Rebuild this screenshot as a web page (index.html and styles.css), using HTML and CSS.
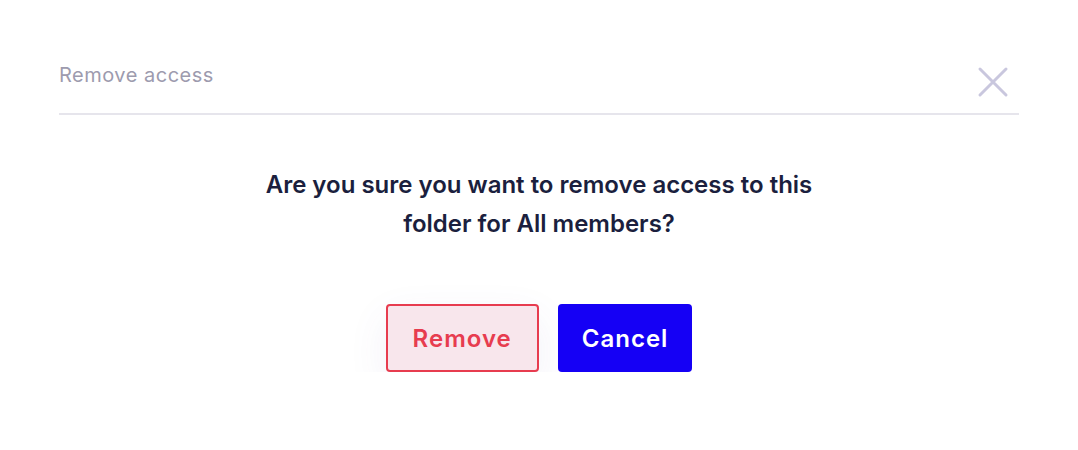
FILE: index.html
```html
<!DOCTYPE html>
<html lang="en">
<head>
  <meta charset="UTF-8" />
  <title>Remove access</title>
  <meta name="viewport" content="width=device-width, initial-scale=1" />
  <link rel="stylesheet" href="styles.css">
</head>
<body>
  <div class="modal">
    <div class="modal-header">
      <h3 class="modal-title">Remove access</h3>
      <button class="close" aria-label="Close">
        <svg width="32" height="32" viewBox="0 0 32 32">
          <path d="M3 3 L29 29 M29 3 L3 29" stroke="#c9c7de" stroke-width="3" stroke-linecap="round" fill="none" />
        </svg>
      </button>
    </div>

    <p class="question">Are you sure you want to remove access to this<br>folder for All members?</p>

    <div class="actions">
      <button class="btn btn-remove">Remove</button>
      <button class="btn btn-cancel">Cancel</button>
    </div>
  </div>
</body>
</html>
```

FILE: styles.css
```css
body {
  margin: 0;
  background: #fff;
  font-family: Inter, "Liberation Sans", Arial, sans-serif;
}

.modal {
  max-width: 960px;
  margin: 0 auto;
  padding-top: 63px;
}

.modal-header {
  display: flex;
  align-items: center;
  justify-content: space-between;
  border-bottom: 2px solid #e6e5ec;
  padding-bottom: 12px;
}

.modal-title {
  margin: 0;
  font-size: 20px;
  font-weight: normal;
  letter-spacing: 0.5px;
  color: #9d9bae;
  padding-bottom: 14px;
}

.close {
  background: none;
  border: none;
  padding: 0;
  margin-right: 10px;
  cursor: pointer;
  display: flex;
}

.question {
  margin: 50px 0 0;
  text-align: center;
  font-size: 24px;
  font-weight: 600;
  line-height: 39px;
  color: #1b1f3e;
}

.actions {
  display: flex;
  justify-content: center;
  gap: 19px;
  margin-top: 61px;
}

.btn {
  height: 68px;
  padding: 0 25px;
  font-family: inherit;
  font-size: 24px;
  font-weight: 600;
  letter-spacing: 1px;
  border-radius: 4px;
  cursor: pointer;
}

.btn-remove {
  background: #f8e6ec;
  color: #e73c4f;
  border: 2px solid #e73c4f;
  box-shadow: 0 14px 40px rgba(90, 80, 160, 0.08);
}

.btn-cancel {
  padding: 0 24px;
  background: #1500f5;
  color: #fff;
  border: none;
}
```
